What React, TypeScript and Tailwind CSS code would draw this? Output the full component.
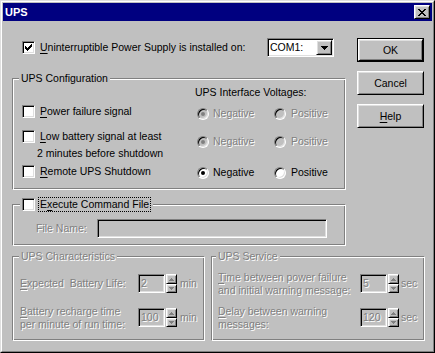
import React from "react";

const SUNKEN =
  "border border-t-[#808080] border-l-[#808080] border-b-white border-r-white shadow-[inset_1px_1px_0_#000000,inset_-1px_-1px_0_#dfdfdf]";
const RAISED =
  "border border-t-white border-l-white border-b-black border-r-black shadow-[inset_1px_1px_0_#dfdfdf,inset_-1px_-1px_0_#808080]";
const ETCHED =
  "border border-t-[#808080] border-l-[#808080] border-b-white border-r-white shadow-[inset_1px_1px_0_#ffffff,inset_-1px_-1px_0_#808080]";
const DIS = "text-[#808080] [text-shadow:1px_1px_0_#ffffff]";

function U({ children }: { children: React.ReactNode }) {
  return <span className="underline underline-offset-[2px] decoration-1">{children}</span>;
}

const CHECK: [number, number][] = [
  [0, 2],
  [1, 3],
  [2, 4],
  [3, 3],
  [4, 2],
  [5, 1],
  [6, 0],
];

function Checkbox({ checked }: { checked?: boolean }) {
  return (
    <div className={`w-[13px] h-[13px] shrink-0 bg-white ${SUNKEN} flex items-center justify-center`}>
      {checked && (
        <svg width="7" height="7" viewBox="0 0 7 7" shapeRendering="crispEdges">
          {CHECK.map(([x, y]) => (
            <rect key={x} x={x} y={y} width="1" height="3" fill="#000" />
          ))}
        </svg>
      )}
    </div>
  );
}

function Radio({ checked, disabled }: { checked?: boolean; disabled?: boolean }) {
  return (
    <div
      className={`w-[12px] h-[12px] shrink-0 rounded-full border border-t-[#808080] border-l-[#808080] border-b-white border-r-white shadow-[inset_1px_1px_0_#000000,inset_-1px_-1px_0_#dfdfdf] flex items-center justify-center ${
        disabled ? "bg-[#c0c0c0]" : "bg-white"
      }`}
    >
      {checked && <div className={`w-[4px] h-[4px] rounded-full ${disabled ? "bg-[#808080]" : "bg-black"}`} />}
    </div>
  );
}

function RadioRow({ className, disabled }: { className: string; disabled?: boolean }) {
  return (
    <div className={`flex items-center h-[13px] pl-[2px] ${className} ${disabled ? DIS : ""}`}>
      <div className="w-[77px] flex items-center gap-[4px]">
        <Radio checked disabled={disabled} />
        <span>Negative</span>
      </div>
      <div className="flex items-center gap-[5px]">
        <Radio disabled={disabled} />
        <span>Positive</span>
      </div>
    </div>
  );
}

const XPIX: number[][] = [
  [0, 1, 6, 7],
  [1, 2, 5, 6],
  [2, 3, 4, 5],
  [3, 4],
  [2, 3, 4, 5],
  [1, 2, 5, 6],
  [0, 1, 6, 7],
];

function CloseGlyph() {
  return (
    <svg width="8" height="7" viewBox="0 0 8 7" shapeRendering="crispEdges">
      {XPIX.map((row, y) => row.map((x) => <rect key={`${x}-${y}`} x={x} y={y} width="1" height="1" fill="#000" />))}
    </svg>
  );
}

function DownTri() {
  return (
    <svg width="7" height="4" viewBox="0 0 7 4" shapeRendering="crispEdges">
      <rect x="0" y="0" width="7" height="1" fill="#000" />
      <rect x="1" y="1" width="5" height="1" fill="#000" />
      <rect x="2" y="2" width="3" height="1" fill="#000" />
      <rect x="3" y="3" width="1" height="1" fill="#000" />
    </svg>
  );
}

function SmallTri({ up }: { up?: boolean }) {
  return (
    <svg width="5" height="3" viewBox="0 0 5 3" shapeRendering="crispEdges">
      {up ? (
        <>
          <rect x="2" y="0" width="1" height="1" fill="#808080" />
          <rect x="1" y="1" width="3" height="1" fill="#808080" />
          <rect x="0" y="2" width="5" height="1" fill="#808080" />
        </>
      ) : (
        <>
          <rect x="0" y="0" width="5" height="1" fill="#808080" />
          <rect x="1" y="1" width="3" height="1" fill="#808080" />
          <rect x="2" y="2" width="1" height="1" fill="#808080" />
        </>
      )}
    </svg>
  );
}

function SpinEdit({ value }: { value: string }) {
  return (
    <div className="flex gap-[1px] shrink-0">
      <div className={`w-[27px] h-[19px] ${SUNKEN} bg-[#c0c0c0] pl-[2px] flex items-center ${DIS}`}>{value}</div>
      <div className="w-[11px] h-[19px] flex flex-col">
        <div className={`h-[10px] bg-[#c0c0c0] ${RAISED} flex items-center justify-center`}>
          <SmallTri up />
        </div>
        <div className={`h-[9px] bg-[#c0c0c0] ${RAISED} flex items-center justify-center`}>
          <SmallTri />
        </div>
      </div>
    </div>
  );
}

function Button({ children, def }: { children: React.ReactNode; def?: boolean }) {
  if (def) {
    return (
      <div className="w-[67px] h-[24px] border border-black">
        <div className={`h-full ${RAISED} flex items-center justify-center`}>{children}</div>
      </div>
    );
  }
  return <div className={`w-[67px] h-[24px] ${RAISED} flex items-center justify-center`}>{children}</div>;
}

export default function App() {
  return (
    <div className="w-[435px] h-[353px] bg-[#c0c0c0] border border-t-[#dfdfdf] border-l-[#dfdfdf] border-b-black border-r-black font-['Liberation_Sans',Arial,sans-serif] text-[10.5px] leading-[13px] text-black select-none">
      <div className="h-full border border-t-white border-l-white border-b-[#808080] border-r-[#808080] p-[1px] flex flex-col">
        {/* Title bar */}
        <div className="h-[18px] shrink-0 bg-[#000080] flex items-center justify-between pl-[2px] pr-[2px]">
          <span className="text-white font-bold text-[11px] leading-[14px]">UPS</span>
          <div className={`w-[16px] h-[14px] bg-[#c0c0c0] ${RAISED} flex items-center justify-center`}>
            <CloseGlyph />
          </div>
        </div>

        {/* Body */}
        <div className="pt-[17px] pl-[9px]">
          <div className="flex gap-[11px]">
            <div className="w-[334px] flex flex-col">
              {/* Row 1 */}
              <div className="h-[19px] flex items-center">
                <div className="ml-[10px]">
                  <Checkbox checked />
                </div>
                <span className="ml-[5px]">
                  <U>U</U>ninterruptible Power Supply is installed on:
                </span>
                <div className={`ml-auto mr-[12px] w-[67px] h-[19px] ${SUNKEN} bg-white flex items-center justify-between pl-[2px] pr-[1px]`}>
                  <span>COM1:</span>
                  <div className={`w-[16px] h-[15px] bg-[#c0c0c0] ${RAISED} flex items-center justify-center`}>
                    <DownTri />
                  </div>
                </div>
              </div>

              {/* UPS Configuration */}
              <div className={`relative mt-[21px] h-[112px] ${ETCHED}`}>
                <span className="absolute left-[6px] top-[-7px] px-[2px] bg-[#c0c0c0] leading-[13px]">UPS Configuration</span>
                <div className="flex">
                  <div className="w-[182px] pl-[9px] flex flex-col">
                    <div className="mt-[26px] flex items-center h-[13px] gap-[5px]">
                      <Checkbox />
                      <span>
                        <U>P</U>ower failure signal
                      </span>
                    </div>
                    <div className="mt-[12px] flex items-center h-[13px] gap-[5px]">
                      <Checkbox />
                      <span>
                        <U>L</U>ow battery signal at least
                      </span>
                    </div>
                    <div className="mt-[4px] pl-[15px] h-[13px]">2 minutes before shutdown</div>
                    <div className="mt-[5px] flex items-center h-[13px] gap-[5px]">
                      <Checkbox />
                      <span>
                        <U>R</U>emote UPS Shutdown
                      </span>
                    </div>
                  </div>
                  <div className="flex flex-col">
                    <div className="mt-[7px] h-[13px]">UPS Interface Voltages:</div>
                    <RadioRow className="mt-[8px]" disabled />
                    <RadioRow className="mt-[15px]" disabled />
                    <RadioRow className="mt-[18px]" />
                  </div>
                </div>
              </div>

              {/* Execute Command File */}
              <div className={`relative mt-[14px] h-[42px] ${ETCHED}`}>
                <div className="absolute left-[7px] top-[-8px] h-[15px] px-[2px] bg-[#c0c0c0] flex items-center gap-[3px]">
                  <Checkbox />
                  <span className="border border-dotted border-black px-[1px] leading-[13px]">
                    E<U>x</U>ecute Command File
                  </span>
                </div>
                <div className="mt-[14px] flex items-center pl-[23px]">
                  <span className={`w-[61px] ${DIS}`}>File Name:</span>
                  <div className={`w-[230px] h-[19px] ${SUNKEN} bg-[#c0c0c0]`} />
                </div>
              </div>
            </div>

            {/* Buttons */}
            <div className="w-[67px] flex flex-col gap-[9px]">
              <Button def>OK</Button>
              <Button>Cancel</Button>
              <Button>
                <U>H</U>elp
              </Button>
            </div>
          </div>

          {/* Bottom groups */}
          <div className="mt-[10px] flex gap-[6px]">
            <div className={`relative w-[193px] h-[85px] ${ETCHED}`}>
              <span className={`absolute left-[6px] top-[-7px] px-[2px] bg-[#c0c0c0] leading-[13px] ${DIS}`}>UPS Characteristics</span>
              <div className="mt-[17px] flex items-center h-[19px] pl-[7px]">
                <div className={`w-[118px] ${DIS}`}>
                  <U>E</U>xpected&nbsp; Battery Life:
                </div>
                <SpinEdit value="2" />
                <span className={`ml-[3px] ${DIS}`}>min</span>
              </div>
              <div className="mt-[15px] flex items-center h-[19px] pl-[7px]">
                <div className={`w-[118px] ${DIS}`}>
                  <U>B</U>attery recharge time
                  <br />
                  per minute of run time:
                </div>
                <SpinEdit value="100" />
                <span className={`ml-[3px] ${DIS}`}>min</span>
              </div>
            </div>

            <div className={`relative w-[214px] h-[85px] ${ETCHED}`}>
              <span className={`absolute left-[4px] top-[-7px] px-[2px] bg-[#c0c0c0] leading-[13px] ${DIS}`}>UPS Service</span>
              <div className="mt-[17px] flex items-center h-[19px] pl-[6px]">
                <div className={`w-[142px] ${DIS}`}>
                  <U>T</U>ime between power failure
                  <br />
                  and initial warning message:
                </div>
                <SpinEdit value="5" />
                <span className={`ml-[2px] ${DIS}`}>sec</span>
              </div>
              <div className="mt-[15px] flex items-center h-[19px] pl-[6px]">
                <div className={`w-[142px] ${DIS}`}>
                  <U>D</U>elay between warning
                  <br />
                  messages:
                </div>
                <SpinEdit value="120" />
                <span className={`ml-[2px] ${DIS}`}>sec</span>
              </div>
            </div>
          </div>
        </div>
      </div>
    </div>
  );
}
